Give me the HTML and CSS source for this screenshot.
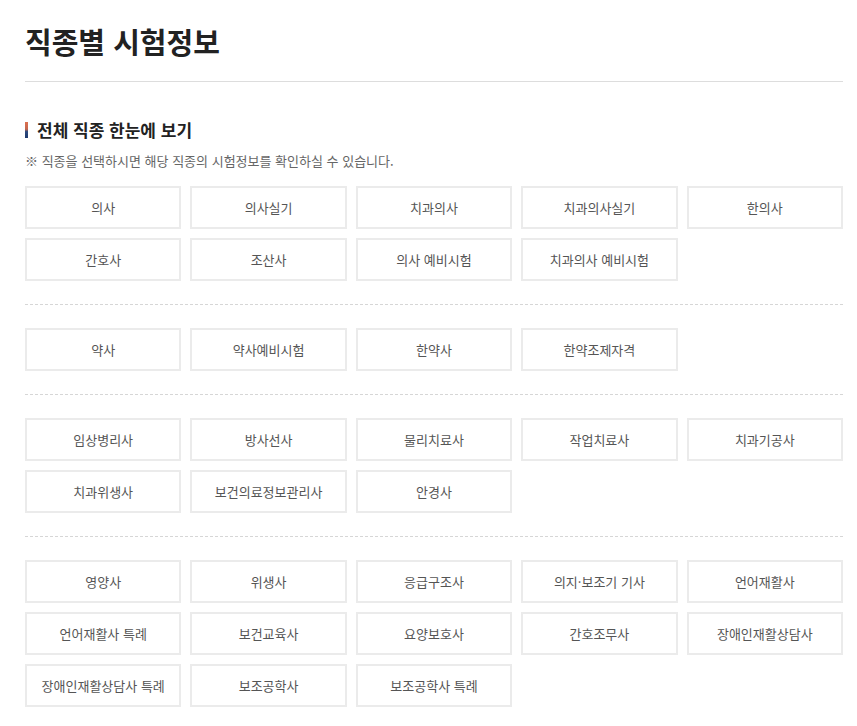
FILE: index.html
```html
<!DOCTYPE html>
<html lang="ko">
    <head>
        <meta charset="utf-8">
        <title>직종별 시험정보</title>
        <link rel="stylesheet" href="styles.css">
    </head>
    <body>
        <div id="container">
            <h1 class="page-title">직종별 시험정보</h1>

            <h2 class="sub-title">전체 직종 한눈에 보기</h2>
            <p class="notice">※ 직종을 선택하시면 해당 직종의 시험정보를 확인하실 수 있습니다.</p>

            <div class="job-group">
                <a class="job" href="#">의사</a>
                <a class="job" href="#">의사실기</a>
                <a class="job" href="#">치과의사</a>
                <a class="job" href="#">치과의사실기</a>
                <a class="job" href="#">한의사</a>
                <a class="job" href="#">간호사</a>
                <a class="job" href="#">조산사</a>
                <a class="job" href="#">의사 예비시험</a>
                <a class="job" href="#">치과의사 예비시험</a>
            </div>

            <div class="job-group">
                <a class="job" href="#">약사</a>
                <a class="job" href="#">약사예비시험</a>
                <a class="job" href="#">한약사</a>
                <a class="job" href="#">한약조제자격</a>
            </div>

            <div class="job-group">
                <a class="job" href="#">임상병리사</a>
                <a class="job" href="#">방사선사</a>
                <a class="job" href="#">물리치료사</a>
                <a class="job" href="#">작업치료사</a>
                <a class="job" href="#">치과기공사</a>
                <a class="job" href="#">치과위생사</a>
                <a class="job" href="#">보건의료정보관리사</a>
                <a class="job" href="#">안경사</a>
            </div>

            <div class="job-group">
                <a class="job" href="#">영양사</a>
                <a class="job" href="#">위생사</a>
                <a class="job" href="#">응급구조사</a>
                <a class="job" href="#">의지·보조기 기사</a>
                <a class="job" href="#">언어재활사</a>
                <a class="job" href="#">언어재활사 특례</a>
                <a class="job" href="#">보건교육사</a>
                <a class="job" href="#">요양보호사</a>
                <a class="job" href="#">간호조무사</a>
                <a class="job" href="#">장애인재활상담사</a>
                <a class="job" href="#">장애인재활상담사 특례</a>
                <a class="job" href="#">보조공학사</a>
                <a class="job" href="#">보조공학사 특례</a>
            </div>
        </div>
    </body>
</html>
```

FILE: styles.css
```css
body {
    margin: 0;
    background-color: white;
    color: #222;
    font-family: "Noto Sans CJK KR", "Noto Sans", sans-serif;
}

#container {
    margin: 0 14px 0 25px;
}

.page-title {
    margin: 0;
    padding: 21px 0 20px;
    font-size: 29px;
    line-height: 40px;
    font-weight: bold;
    color: #222;
    border-bottom: 1px solid #ddd;
}

.sub-title {
    margin: 36px 0 0;
    padding-left: 12px;
    position: relative;
    font-size: 17px;
    line-height: 24px;
    font-weight: bold;
    color: #222;
}

/* two-tone marker in front of the section heading */
.sub-title:before {
    content: '';
    position: absolute;
    left: 0;
    top: 4px;
    width: 3px;
    height: 16px;
    background-image: linear-gradient(#dd7050, #c4674e 45%, #2c4a7e 60%, #1e3a6e);
}

.notice {
    margin: 9px 0 0;
    font-size: 13px;
    line-height: 20px;
    color: #666;
}

.job-group {
    display: grid;
    grid-template-columns: repeat(5, 1fr);
    grid-auto-rows: 43px;
    gap: 9px;
    padding: 23px 0;
    border-top: 1px dashed #d6d6d6;
}

.job-group:first-of-type {
    margin-top: 15px;
    padding-top: 0;
    border-top: none;
}

.job {
    display: flex;
    align-items: center;
    justify-content: center;
    box-sizing: border-box;
    border: 2px solid #ebebeb;
    font-size: 13px;
    color: #555;
    text-decoration: none;
    white-space: nowrap;
}
```
